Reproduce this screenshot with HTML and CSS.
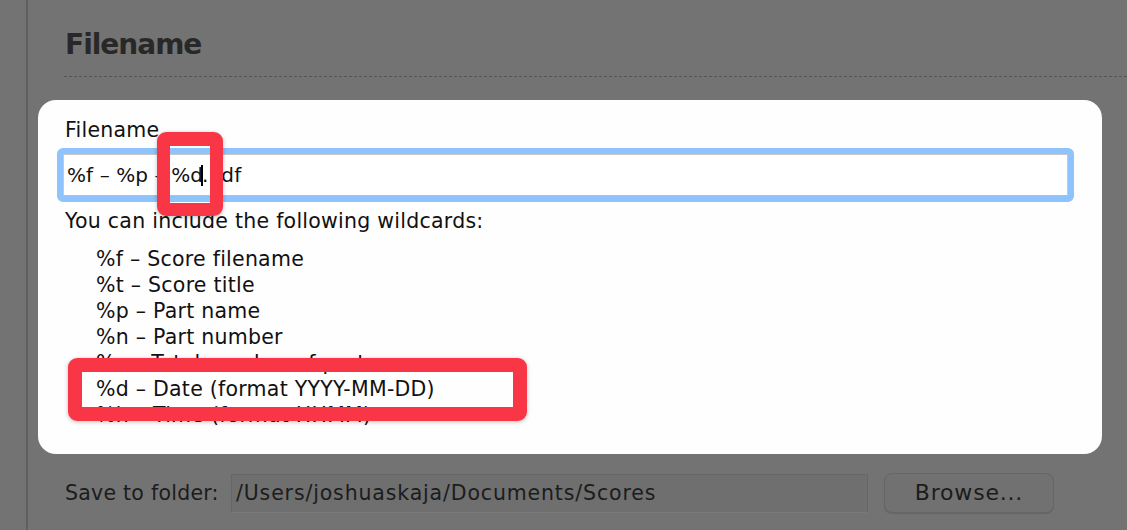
FILE: index.html
```html
<!DOCTYPE html>
<html>
<head>
<meta charset="utf-8">
<link rel="stylesheet" href="styles.css">
</head>
<body>
<div class="frame">
  <h1 class="title">Filename</h1>
  <div class="rule"></div>
  <div class="panel">
    <div class="field-label">Filename</div>
    <div class="ring">
      <div class="input">%f – %p – %d<span class="caret"></span>.pdf</div>
    </div>
    <div class="hint">You can include the following wildcards:</div>
    <ul class="list">
      <li>%f – Score filename</li>
      <li>%t – Score title</li>
      <li>%p – Part name</li>
      <li>%n – Part number</li>
      <li>%c – Total number of parts</li>
      <li>%d – Date (format YYYY-MM-DD)</li>
      <li>%h – Time (format HHMM)</li>
    </ul>
    <div class="mark mark-field"></div>
    <div class="mark mark-date"></div>
  </div>
  <div class="bottom">
    <div class="bottom-label">Save to folder:</div>
    <div class="path">/Users/joshuaskaja/Documents/Scores</div>
    <div class="button">Browse...</div>
  </div>
</div>
</body>
</html>
```
FILE: styles.css
```css
html, body {
  margin: 0;
  padding: 0;
}
body {
  background: #737373;
  font-family: "DejaVu Sans", "Liberation Sans", sans-serif;
  width: 1127px;
  height: 530px;
  overflow: hidden;
}
.frame {
  margin-left: 26px;
  border-left: 2px solid #5f5f5f;
  height: 530px;
  box-sizing: border-box;
}
.title {
  margin: 0;
  padding: 29px 0 0 37px;
  font-size: 28px;
  line-height: 32px;
  font-weight: bold;
  letter-spacing: -1px;
  color: #282828;
}
.rule {
  margin: 15px 0 0 36px;
  height: 1px;
  background: repeating-linear-gradient(to right, #555 0 3px, transparent 3px 5px);
}
.panel {
  position: relative;
  margin: 23px 0 0 10px;
  width: 1064px;
  height: 354px;
  box-sizing: border-box;
  background: #fefefe;
  border-radius: 18px;
  padding: 18px 0 0 19px;
  color: #111;
  font-size: 20.5px;
  letter-spacing: 0.25px;
}
.field-label {
  margin-left: 8px;
  line-height: 24px;
}
.ring {
  margin-top: 6px;
  width: 1017px;
  height: 54px;
  box-sizing: border-box;
  border: 6px solid #8ec3fb;
  border-radius: 6px;
}
.input {
  height: 42px;
  box-sizing: border-box;
  border: 1px solid #c9c9c9;
  border-bottom-color: #bdbdbd;
  background: #fff;
  padding-left: 3px;
  font-size: 20px;
  letter-spacing: 0.1px;
  line-height: 40px;
  white-space: nowrap;
}
.caret {
  display: inline-block;
  width: 2px;
  height: 21px;
  background: #000;
  vertical-align: -4px;
  margin: 0 -1px 0 -2px;
}
.hint {
  margin: 7px 0 0 8px;
  line-height: 24px;
}
.list {
  list-style: none;
  margin: 13px 0 0 39px;
  padding: 0;
  line-height: 26px;
}
.mark {
  position: absolute;
  box-sizing: border-box;
  border: 14px solid #f93646;
  border-radius: 9px;
  box-shadow: 0 1px 4px rgba(0, 0, 0, 0.25);
}
.mark-field {
  left: 119px;
  top: 32px;
  width: 66px;
  height: 84px;
  border-width: 14px 13px 13px 13px;
}
.mark-date {
  left: 30px;
  top: 258px;
  width: 459px;
  height: 63px;
}
.bottom {
  display: flex;
  align-items: center;
  margin: 19px 0 0 37px;
  color: #1c1c1c;
  font-size: 20.5px;
  letter-spacing: 0.25px;
}
.bottom-label {
  flex: 0 0 166px;
}
.path {
  width: 637px;
  height: 39px;
  box-sizing: border-box;
  background: #6f6f6f;
  border: 1px solid #666;
  border-bottom-color: #7a7a7a;
  padding-left: 4px;
  line-height: 37px;
  letter-spacing: 0.85px;
  white-space: nowrap;
}
.button {
  margin-left: 16px;
  width: 170px;
  height: 40px;
  box-sizing: border-box;
  border: 1px solid #666;
  border-radius: 8px;
  background: #717171;
  box-shadow: 0 1px 1px rgba(0, 0, 0, 0.12);
  text-align: center;
  font-size: 22px;
  letter-spacing: 0.8px;
  line-height: 38px;
}
```
